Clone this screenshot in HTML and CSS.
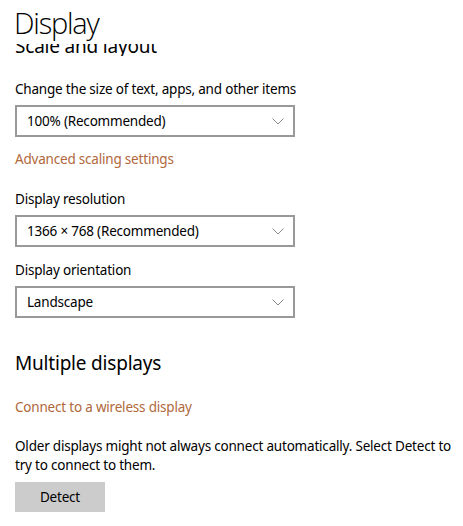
FILE: index.html
```html
<!DOCTYPE html>
<html lang="en">
<head>
<meta charset="utf-8">
<title>Display</title>
<link rel="stylesheet" href="styles.css">
</head>
<body>

    <div class="page-header">
        <h1>Display</h1>
    </div>

    <div class="scrolled-edge">
        <h2 class="group-title">Scale and layout</h2>
    </div>

    <p class="label first">Change the size of text, apps, and other items</p>
    <div class="dropdown">
        <span>100% (Recommended)</span>
        <svg class="chevron" width="12" height="7" viewBox="0 0 12 7"><path d="M0.5 0.5 L6 6 L11.5 0.5" /></svg>
    </div>

    <a class="link link-after-dropdown" href="#">Advanced scaling settings</a>

    <p class="label">Display resolution</p>
    <div class="dropdown">
        <span>1366 × 768 (Recommended)</span>
        <svg class="chevron" width="12" height="7" viewBox="0 0 12 7"><path d="M0.5 0.5 L6 6 L11.5 0.5" /></svg>
    </div>

    <p class="label after-dropdown">Display orientation</p>
    <div class="dropdown">
        <span>Landscape</span>
        <svg class="chevron" width="12" height="7" viewBox="0 0 12 7"><path d="M0.5 0.5 L6 6 L11.5 0.5" /></svg>
    </div>

    <h2 class="group-title section-title">Multiple displays</h2>

    <a class="link link-after-title" href="#">Connect to a wireless display</a>

    <p class="description">Older displays might not always connect automatically. Select Detect to try to connect to them.</p>
    <button class="detect-button">Detect</button>

</body>
</html>
```

FILE: styles.css
```css
body {
    margin: 0;
    padding: 0 6px 0 15px;
    background-color: white;
    color: black;
    font-family: "Noto Sans", "Open Sans", sans-serif;
    font-size: 13.5px;
    letter-spacing: -0.2px;
}

.page-header {
    height: 40px;
    padding: 4px 0 0 0;
    margin-left: -1px;
}

h1 {
    margin: 0;
    font-family: "Open Sans", "Noto Sans", sans-serif;
    font-size: 29px;
    font-weight: 300;
    letter-spacing: -1.2px;
    line-height: 37px;
}

.scrolled-edge {
    height: 12px;
    overflow: hidden;
}

.group-title {
    margin: 0;
    font-size: 19px;
    font-weight: 400;
    line-height: 28px;
}

.scrolled-edge .group-title {
    line-height: 12px;
    margin-top: -4px;
    margin-left: 0;
}

.label {
    margin: 20px 0 6px 0;
    line-height: 20px;
}

.label.first {
    margin-top: 23px;
}

.label.after-dropdown {
    margin-top: 13px;
}

.dropdown {
    box-sizing: border-box;
    display: flex;
    align-items: center;
    justify-content: space-between;
    width: 280px;
    height: 32px;
    padding: 0 9px 0 10px;
    border: 2px solid #999999;
}

.chevron path {
    fill: none;
    stroke: #8a8a8a;
    stroke-width: 1;
}

.link {
    display: block;
    color: #b0683c;
    text-decoration: none;
    line-height: 20px;
}

.link-after-dropdown {
    margin-top: 12px;
}

.link-after-title {
    margin-top: 20px;
}

.section-title {
    margin-top: 31px;
}

.description {
    margin: 20px 0 7px 0;
    line-height: 19px;
}

.detect-button {
    display: block;
    width: 90px;
    height: 30px;
    padding: 0;
    border: none;
    background-color: #cccccc;
    color: black;
    font-family: inherit;
    font-size: 13.5px;
    letter-spacing: -0.2px;
    line-height: 30px;
}
```
